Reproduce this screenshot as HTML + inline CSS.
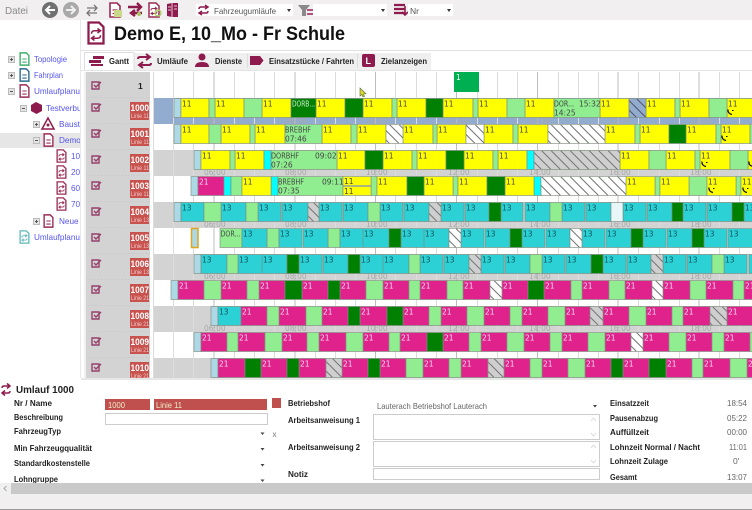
<!DOCTYPE html>
<html><head><meta charset="utf-8"><style>
html,body{margin:0;padding:0;background:#fff;width:752px;height:510px;overflow:hidden}
svg{display:block}
text{font-family:"Liberation Sans",sans-serif}
.g text{font-family:"DejaVu Sans",sans-serif;font-size:7.5px}
.y{fill:#ff0}.l{fill:#90ee90}.d{fill:#008000}.c{fill:#0ff}.t{fill:#2bd1d4}.m{fill:#e0228c}.b{fill:#add8e6}.hw{fill:url(#hw)}.hg{fill:url(#hg)}.hb{fill:url(#hb)}
.g path{stroke:#7f8c7f;stroke-width:1;stroke-opacity:.65}
.ty text{fill:#444}.tt text{fill:#0f5560}.tm text{fill:#fbdcf0}
.lb{font-weight:bold;font-size:8.5px;fill:#222}
.v{font-size:8.5px;fill:#666}
.tab{font-weight:bold;font-size:8.5px;fill:#222}
.tr{font-size:8.2px;fill:#5555ee}
.g text.tm2{font-size:7.5px;fill:#a8a8a8}
.n{font-weight:bold;font-size:9.5px;fill:#fff}
.s{font-size:6.5px;fill:#f3c9c7}
</style></head><body>
<svg xmlns="http://www.w3.org/2000/svg" width="752" height="510" viewBox="0 0 752 510">
<defs>
<pattern id="hw" patternUnits="userSpaceOnUse" width="9.5" height="19"><rect width="9.5" height="19" fill="#fff"/><path d="M-9.5 0L9.5 19M0 0L19 19" stroke="#777" stroke-width="1"/></pattern>
<pattern id="hg" patternUnits="userSpaceOnUse" width="9.5" height="19"><rect width="9.5" height="19" fill="#cfcfcf"/><path d="M-9.5 0L9.5 19M0 0L19 19" stroke="#777" stroke-width="1"/></pattern>
<pattern id="hb" patternUnits="userSpaceOnUse" width="9.5" height="19"><rect width="9.5" height="19" fill="#92acd0"/><path d="M-9.5 0L9.5 19M0 0L19 19" stroke="#556" stroke-width="1"/></pattern>
<symbol id="doc" viewBox="0 0 12 16" overflow="visible"><path d="M1 1h7l3 3v11H1z" fill="#fff" stroke="currentColor" stroke-width="1.600"/><path d="M3.500 8h5M3.500 11.500h5" stroke="currentColor" stroke-width="1.200" fill="none"/></symbol>
<symbol id="sw" viewBox="0 0 12 16" overflow="visible"><path d="M1 1h7l3 3v11H1z" fill="#fff" stroke="currentColor" stroke-width="1.500"/><path d="M3 8.500q0-2 2-2h3M7 5l2 1.500-2 1.500M9 9.500q0 2-2 2H4M5 10l-2 1.500 2 1.500" stroke="currentColor" stroke-width="1" fill="none"/></symbol>
<symbol id="ed" viewBox="0 0 11 9" overflow="visible"><path d="M1 1h7v7H1z" fill="none" stroke="#96416a" stroke-width="1.400"/><path d="M3 4l2 2 5-5" fill="none" stroke="#96416a" stroke-width="1.400"/></symbol>
<symbol id="ph" viewBox="0 0 8 8" overflow="visible"><path d="M1 1q-.5 4 4 5" fill="none" stroke="#111" stroke-width="1.300"/><path d="M5 2h1.500" stroke="#111" stroke-width="1"/></symbol>
<symbol id="ex" viewBox="0 0 7 7" overflow="visible"><rect x=".5" y=".5" width="6" height="6" fill="#e4e4e4" stroke="#bbb"/><path d="M2 3.500h3" stroke="#555"/></symbol>
<symbol id="ep" viewBox="0 0 7 7" overflow="visible"><rect x=".5" y=".5" width="6" height="6" fill="#e4e4e4" stroke="#bbb"/><path d="M2 3.500h3M3.500 2v3" stroke="#555"/></symbol>
</defs>

<!-- top toolbar -->
<rect x="0" y="0" width="752" height="20" fill="#f1efef"/>
<text x="5" y="14" font-size="10.500" fill="#8a8a8a" textLength="23" lengthAdjust="spacingAndGlyphs">Datei</text>
<circle cx="50" cy="10" r="8" fill="#707070"/><path d="M55 10h-9M50 6l-4 4 4 4" stroke="#fff" stroke-width="2" fill="none"/>
<circle cx="71" cy="10" r="8" fill="#a9a9a9"/><path d="M66 10h9M71 6l4 4-4 4" stroke="#eee" stroke-width="2" fill="none"/>
<path d="M87 8h10M94 5l3 3-3 3M97 13H87M90 10l-3 3 3 3" stroke="#777" stroke-width="1.300" fill="none"/>
<use href="#doc" x="109" y="2" width="12" height="16" color="#9a2b57"/><rect x="114" y="10" width="8" height="7" fill="#c9d88a"/>
<path d="M128 7h12M137 3l4 4-4 4" stroke="#8e1b4d" stroke-width="2.400" fill="none"/><path d="M142 13h-10M135 10l-4 3 4 3" stroke="#8e1b4d" stroke-width="2.400" fill="none"/><circle cx="139" cy="14" r="2" fill="#a8c860"/>
<use href="#sw" x="148" y="2" width="12" height="16" color="#9a2b57"/><circle cx="158" cy="13" r="3" fill="none" stroke="#a8d060" stroke-width="1.300"/>
<path d="M167 4l5-1h6v14h-6l-5-1z" fill="#8e1b4d"/><path d="M172 3v14M174 6h3M174 9h3M168 7h3M168 10h3" stroke="#e8c8d4" stroke-width="1"/>
<rect x="196" y="4" width="97" height="12" fill="#fff"/>
<path d="M199 9q0-2 2-2h6M205 5l3 2-3 2M208 11q0 2-2 2h-6M202 11l-3 2 3 2" stroke="#8e1b4d" stroke-width="1.500" fill="none"/>
<text x="214" y="14" font-size="8.500" fill="#555" textLength="62" lengthAdjust="spacingAndGlyphs">Fahrzeugumläufe</text>
<path d="M287 9h4l-2 3z" fill="#333"/>
<path d="M298 5h12l-4 5v6h-4v-6z" fill="#8a8a8a"/><path d="M307 10h6M307 14h6" stroke="#a01f55" stroke-width="1.500"/>
<rect x="313" y="4" width="74" height="12" fill="#fff"/>
<path d="M381 9h4l-2 3z" fill="#333"/>
<path d="M394 5h11M394 9h11M394 13h11" stroke="#8e1b4d" stroke-width="2.200"/><path d="M405 6v9M402 12l3 3 3-3" stroke="#8e1b4d" stroke-width="1.600" fill="none"/>
<rect x="408" y="4" width="45" height="12" fill="#fff"/>
<text x="410" y="14" font-size="8.500" fill="#555">Nr</text>
<path d="M447 9h4l-2 3z" fill="#333"/>

<!-- tree -->
<use href="#ep" x="8" y="56" width="7" height="7"/>
<use href="#doc" x="19" y="52" width="11" height="14" color="#3fae6a"/>
<text class="tr" x="34" y="62" textLength="33" lengthAdjust="spacingAndGlyphs">Topologie</text>
<use href="#ep" x="8" y="72" width="7" height="7"/>
<use href="#doc" x="19" y="68" width="11" height="14" color="#2a6a8e"/>
<text class="tr" x="34" y="78" textLength="29" lengthAdjust="spacingAndGlyphs">Fahrplan</text>
<use href="#ex" x="8" y="88" width="7" height="7"/>
<use href="#doc" x="19" y="84" width="11" height="14" color="#9a2b57"/>
<text class="tr" x="34" y="94">Umlaufplanung</text>
<use href="#ex" x="20" y="105" width="7" height="7"/>
<path d="M36 102l6 3v6l-5.500 3-5.500-3v-6z" fill="#8e1b4d"/>
<text class="tr" x="46" y="111">Testverbund</text>
<use href="#ep" x="33" y="121" width="7" height="7"/>
<path d="M48 118l6 11H42z" fill="#fff" stroke="#8e1b4d" stroke-width="1.500"/><circle cx="48" cy="125" r="1.500" fill="#8e1b4d"/>
<text class="tr" x="59" y="127">Baustelle</text>
<rect x="0" y="133" width="80" height="15" fill="#e6e6e6"/>
<use href="#ex" x="33" y="137" width="7" height="7"/>
<use href="#doc" x="43" y="133" width="11" height="14" color="#9a2b57"/>
<text class="tr" x="59" y="143">Demo E</text>
<use href="#sw" x="56" y="149" width="11" height="14" color="#9a2b57"/><text class="tr" x="71" y="159">10_Mo</text>
<use href="#sw" x="56" y="165" width="11" height="14" color="#9a2b57"/><text class="tr" x="71" y="175">20_Sa</text>
<use href="#sw" x="56" y="181" width="11" height="14" color="#9a2b57"/><text class="tr" x="71" y="191">60_So</text>
<use href="#sw" x="56" y="197" width="11" height="14" color="#9a2b57"/><text class="tr" x="71" y="207">70_Fe</text>
<use href="#ep" x="33" y="218" width="7" height="7"/>
<use href="#doc" x="43" y="214" width="11" height="14" color="#9a2b57"/>
<text class="tr" x="59" y="224">Neue</text>
<use href="#sw" x="19" y="230" width="11" height="14" color="#5fb8b8"/>
<text class="tr" x="34" y="240">Umlaufplanung</text>

<!-- main -->
<rect x="80" y="20" width="672" height="360" fill="#fff"/>
<rect x="80" y="20" width="1" height="360" fill="#e8e8e8"/>
<rect x="84" y="72" width="2" height="306" fill="#f0f0f0"/>
<use href="#sw" x="87" y="21" width="18" height="24" color="#8e1b4d"/>
<text x="114" y="40" font-size="19.500" font-weight="bold" fill="#111" textLength="231" lengthAdjust="spacingAndGlyphs">Demo E, 10_Mo - Fr Schule</text>
<rect x="81" y="50" width="671" height="1" fill="#e2e2e2"/>
<rect x="134" y="53" width="297" height="17" fill="#efefef"/>
<path d="M84.500 70V52.500h49.500V70" fill="#fff" stroke="#ddd"/>
<path d="M89 60h12v3H89zM93 56h11v3H93zM91 64h12v2H91z" fill="#8e1b4d"/>
<text class="tab" x="109" y="64" textLength="20" lengthAdjust="spacingAndGlyphs">Gantt</text>
<path d="M138 59q0-2 2-2h9M146 54l4 3-4 3M151 63q0 2-2 2h-9M143 62l-4 3 4 3" stroke="#8e1b4d" stroke-width="2" fill="none"/>
<text class="tab" x="157" y="64" textLength="31" lengthAdjust="spacingAndGlyphs">Umläufe</text>
<circle cx="202" cy="57" r="3.500" fill="#8e1b4d"/><path d="M195 67q0-5 7-5t7 5z" fill="#8e1b4d"/>
<text class="tab" x="215" y="64" textLength="27" lengthAdjust="spacingAndGlyphs">Dienste</text>
<rect x="247" y="54" width="1" height="14" fill="#ddd"/>
<path d="M250 56h10l3.500 4.500L260 65h-10z" fill="#8e1b4d"/>
<text class="tab" x="269" y="64" textLength="85" lengthAdjust="spacingAndGlyphs">Einsatzstücke / Fahrten</text>
<rect x="357" y="54" width="1" height="14" fill="#ddd"/>
<rect x="362" y="54" width="13" height="13" rx="2" fill="#8e1b4d"/><text x="365.500" y="64" font-size="9" font-weight="bold" fill="#fff">L</text>
<text class="tab" x="381" y="64" textLength="46" lengthAdjust="spacingAndGlyphs">Zielanzeigen</text>
<rect x="81" y="70" width="671" height="1" fill="#e4e4e4"/>

<!-- left column -->
<rect x="86" y="72" width="64" height="306" fill="#d3d3d3"/>
<path d="M86 97.500h64M86 123.500h64M86 149.500h64M86 175.500h64M86 201.500h64M86 227.500h64M86 253.500h64M86 279.500h64M86 305.500h64M86 331.500h64M86 357.500h64" stroke="#c6c6c6" stroke-dasharray="1 2"/>
<text x="138" y="89" font-size="8.500" font-weight="bold" fill="#222">1</text>
<use href="#ed" x="91" y="81" width="11" height="9"/>
<use href="#ed" x="91" y="103" width="11" height="9"/>
<use href="#ed" x="91" y="129" width="11" height="9"/>
<use href="#ed" x="91" y="155" width="11" height="9"/>
<use href="#ed" x="91" y="181" width="11" height="9"/>
<use href="#ed" x="91" y="207" width="11" height="9"/>
<use href="#ed" x="91" y="233" width="11" height="9"/>
<use href="#ed" x="91" y="259" width="11" height="9"/>
<use href="#ed" x="91" y="285" width="11" height="9"/>
<use href="#ed" x="91" y="311" width="11" height="9"/>
<use href="#ed" x="91" y="337" width="11" height="9"/>
<use href="#ed" x="91" y="363" width="11" height="9"/>
<g fill="#c8524e">
<rect x="130" y="102" width="19" height="18"/><rect x="130" y="128" width="19" height="18"/><rect x="130" y="154" width="19" height="18"/><rect x="130" y="180" width="19" height="18"/><rect x="130" y="206" width="19" height="18"/><rect x="130" y="232" width="19" height="18"/><rect x="130" y="258" width="19" height="18"/><rect x="130" y="284" width="19" height="18"/><rect x="130" y="310" width="19" height="18"/><rect x="130" y="336" width="19" height="18"/><rect x="130" y="362" width="19" height="16"/>
</g>
<text class="n" x="130.500" y="111" textLength="18.500" lengthAdjust="spacingAndGlyphs">1000</text><text class="s" x="131" y="118" textLength="18" lengthAdjust="spacingAndGlyphs">Linie 11</text>
<text class="n" x="130.500" y="137" textLength="18.500" lengthAdjust="spacingAndGlyphs">1001</text><text class="s" x="131" y="144" textLength="18" lengthAdjust="spacingAndGlyphs">Linie 11</text>
<text class="n" x="130.500" y="163" textLength="18.500" lengthAdjust="spacingAndGlyphs">1002</text><text class="s" x="131" y="170" textLength="18" lengthAdjust="spacingAndGlyphs">Linie 11</text>
<text class="n" x="130.500" y="189" textLength="18.500" lengthAdjust="spacingAndGlyphs">1003</text><text class="s" x="131" y="196" textLength="18" lengthAdjust="spacingAndGlyphs">Linie 11</text>
<text class="n" x="130.500" y="215" textLength="18.500" lengthAdjust="spacingAndGlyphs">1004</text><text class="s" x="131" y="222" textLength="18" lengthAdjust="spacingAndGlyphs">Linie 13</text>
<text class="n" x="130.500" y="241" textLength="18.500" lengthAdjust="spacingAndGlyphs">1005</text><text class="s" x="131" y="248" textLength="18" lengthAdjust="spacingAndGlyphs">Linie 13</text>
<text class="n" x="130.500" y="267" textLength="18.500" lengthAdjust="spacingAndGlyphs">1006</text><text class="s" x="131" y="274" textLength="18" lengthAdjust="spacingAndGlyphs">Linie 13</text>
<text class="n" x="130.500" y="293" textLength="18.500" lengthAdjust="spacingAndGlyphs">1007</text><text class="s" x="131" y="300" textLength="18" lengthAdjust="spacingAndGlyphs">Linie 21</text>
<text class="n" x="130.500" y="319" textLength="18.500" lengthAdjust="spacingAndGlyphs">1008</text><text class="s" x="131" y="326" textLength="18" lengthAdjust="spacingAndGlyphs">Linie 21</text>
<text class="n" x="130.500" y="345" textLength="18.500" lengthAdjust="spacingAndGlyphs">1009</text><text class="s" x="131" y="352" textLength="18" lengthAdjust="spacingAndGlyphs">Linie 21</text>
<text class="n" x="130.500" y="371" textLength="18.500" lengthAdjust="spacingAndGlyphs">1010</text><text class="s" x="131" y="378" textLength="18" lengthAdjust="spacingAndGlyphs">Linie 21</text>

<!-- row bands -->
<rect x="153" y="98" width="599" height="26" fill="#92acd0"/>
<rect x="153" y="150" width="599" height="26" fill="#d3d3d3"/>
<rect x="153" y="202" width="599" height="26" fill="#d3d3d3"/>
<rect x="153" y="254" width="599" height="26" fill="#d3d3d3"/>
<rect x="153" y="306" width="599" height="26" fill="#d3d3d3"/>
<rect x="153" y="358" width="599" height="20" fill="#d3d3d3"/>

<!-- grid lines -->
<path d="M153.500 72V378M173.500 72V378M193.500 72V378M234.500 72V378M254.500 72V378M274.500 72V378M315.500 72V378M335.500 72V378M355.500 72V378M395.500 72V378M416.500 72V378M436.500 72V378M477.500 72V378M497.500 72V378M517.500 72V378M558.500 72V378M578.500 72V378M598.500 72V378M638.500 72V378M659.500 72V378M679.500 72V378M719.500 72V378M739.500 72V378" stroke="#dcdcdc" stroke-width="1"/>
<path d="M214 72V378M295 72V378M375.500 72V378M456.500 72V378M537.500 72V378M618 72V378M699 72V378" stroke="#bdbdbd" stroke-width="1"/>

<!-- header block -->
<rect x="454" y="72" width="25" height="20" fill="#00b050"/>
<text x="456" y="80" font-size="7.500" fill="#fff" style="font-family:'DejaVu Sans',sans-serif">1</text>

<!-- time labels -->
<g class="g">
<text class="tm2" x="204" y="123">06:00</text><text class="tm2" x="285" y="123">08:00</text><text class="tm2" x="366" y="123">10:00</text><text class="tm2" x="448" y="123">12:00</text><text class="tm2" x="529" y="123">14:00</text><text class="tm2" x="609" y="123">16:00</text><text class="tm2" x="690" y="123">18:00</text>
<text class="tm2" x="204" y="175">06:00</text><text class="tm2" x="285" y="175">08:00</text><text class="tm2" x="366" y="175">10:00</text><text class="tm2" x="448" y="175">12:00</text><text class="tm2" x="529" y="175">14:00</text><text class="tm2" x="609" y="175">16:00</text><text class="tm2" x="690" y="175">18:00</text>
<text class="tm2" x="204" y="227">06:00</text><text class="tm2" x="285" y="227">08:00</text><text class="tm2" x="366" y="227">10:00</text><text class="tm2" x="448" y="227">12:00</text><text class="tm2" x="529" y="227">14:00</text><text class="tm2" x="609" y="227">16:00</text><text class="tm2" x="690" y="227">18:00</text>
<text class="tm2" x="204" y="279">06:00</text><text class="tm2" x="285" y="279">08:00</text><text class="tm2" x="366" y="279">10:00</text><text class="tm2" x="448" y="279">12:00</text><text class="tm2" x="529" y="279">14:00</text><text class="tm2" x="609" y="279">16:00</text><text class="tm2" x="690" y="279">18:00</text>
<text class="tm2" x="204" y="331">06:00</text><text class="tm2" x="285" y="331">08:00</text><text class="tm2" x="366" y="331">10:00</text><text class="tm2" x="448" y="331">12:00</text><text class="tm2" x="529" y="331">14:00</text><text class="tm2" x="609" y="331">16:00</text><text class="tm2" x="690" y="331">18:00</text>
</g>

<!-- 1000 -->
<g class="g ty" transform="translate(0 98.500)">
<path class="b" d="M174 0h7v19h-7z"/>
<path class="y" d="M181 0h28v19h-28zM215 0h29v19h-29zM262 0h29v19h-29zM316 0h29v19h-29zM363 0h29v19h-29zM397 0h29v19h-29zM443 0h30v19h-30zM478 0h29v19h-29zM525 0h29v19h-29zM600 0h29v19h-29zM646 0h29v19h-29zM680 0h29v19h-29zM727 0h29v19h-29z"/>
<path class="l" d="M209 0h6v19h-6zM244 0h18v19h-18zM392 0h5v19h-5zM473 0h5v19h-5zM507 0h18v19h-18zM554 0h46v19h-46zM675 0h5v19h-5zM709 0h18v19h-18z"/>
<path class="d" d="M291 0h25v19h-25zM345 0h18v19h-18zM426 0h17v19h-17z"/>
<path class="hb" d="M629 0h17v19h-17z"/>
<text x="182" y="8">11</text><text x="216" y="8">11</text><text x="263" y="8">11</text><text x="317" y="8">11</text><text x="364" y="8">11</text><text x="398" y="8">11</text><text x="444" y="8">11</text><text x="479" y="8">11</text><text x="526" y="8">11</text><text x="601" y="8">11</text><text x="647" y="8">11</text><text x="681" y="8">11</text><text x="728" y="8">11</text>
<text x="292" y="8" style="fill:#cfeccf" textLength="23" lengthAdjust="spacingAndGlyphs">DORB...</text>
<text x="554" y="8" textLength="20" lengthAdjust="spacingAndGlyphs">DOR...</text><text x="579" y="8">15:32</text><text x="554" y="17">14:25</text>
<use href="#ph" x="727" y="10" width="8" height="8"/>
</g>
<!-- 1001 -->
<g class="g ty" transform="translate(0 124.500)">
<path class="b" d="M174 0h7v19h-7z"/>
<path class="y" d="M181 0h28v19h-28zM221 0h29v19h-29zM255 0h30v19h-30zM322 0h29v19h-29zM357 0h29v19h-29zM403 0h30v19h-30zM437 0h29v19h-29zM484 0h29v19h-29zM518 0h30v19h-30zM605 0h30v19h-30zM640 0h29v19h-29zM686 0h30v19h-30zM721 0h29v19h-29z"/>
<path class="l" d="M209 0h12v19h-12zM250 0h5v19h-5zM285 0h37v19h-37zM351 0h6v19h-6zM433 0h4v19h-4zM513 0h5v19h-5zM635 0h5v19h-5zM716 0h5v19h-5zM750 0h3v19h-3z"/>
<path class="d" d="M669 0h17v19h-17z"/>
<path class="hw" d="M386 0h17v19h-17zM466 0h18v19h-18zM548 0h57v19h-57z"/>
<text x="182" y="8">11</text><text x="222" y="8">11</text><text x="256" y="8">11</text><text x="323" y="8">11</text><text x="358" y="8">11</text><text x="404" y="8">11</text><text x="438" y="8">11</text><text x="485" y="8">11</text><text x="519" y="8">11</text><text x="606" y="8">11</text><text x="641" y="8">11</text><text x="687" y="8">11</text><text x="722" y="8">11</text>
<text x="285" y="8" textLength="26" lengthAdjust="spacingAndGlyphs">BREBHF</text><text x="285" y="17">07:46</text>
<use href="#ph" x="721" y="10" width="8" height="8"/>
</g>
<!-- 1002 -->
<g class="g ty" transform="translate(0 150.500)">
<path class="b" d="M194 0h7v19h-7z"/>
<path class="y" d="M201 0h29v19h-29zM235 0h29v19h-29zM337 0h28v19h-28zM383 0h29v19h-29zM417 0h29v19h-29zM464 0h29v19h-29zM498 0h29v19h-29zM620 0h29v19h-29zM666 0h29v19h-29zM700 0h30v19h-30zM748 0h6v19h-6z"/>
<path class="l" d="M230 0h5v19h-5zM271 0h66v19h-66zM412 0h5v19h-5zM493 0h5v19h-5zM649 0h17v19h-17zM695 0h5v19h-5zM730 0h18v19h-18z"/>
<path class="c" d="M264 0h7v19h-7zM527 0h7v19h-7z"/>
<path class="d" d="M365 0h18v19h-18zM446 0h18v19h-18z"/>
<path class="hg" d="M534 0h86v19h-86z"/>
<text x="202" y="8">11</text><text x="236" y="8">11</text><text x="338" y="8">11</text><text x="384" y="8">11</text><text x="418" y="8">11</text><text x="465" y="8">11</text><text x="499" y="8">11</text><text x="621" y="8">11</text><text x="667" y="8">11</text><text x="701" y="8">11</text>
<text x="271" y="8" textLength="28" lengthAdjust="spacingAndGlyphs">DORBHF</text><text x="315" y="8">09:02</text><text x="271" y="17">07:26</text>
<use href="#ph" x="701" y="10" width="8" height="8"/><use href="#ph" x="748" y="10" width="8" height="8"/>
</g>
<!-- 1003 -->
<g class="g ty" transform="translate(0 176.500)">
<path class="b" d="M191 0h7v19h-7z"/>
<path class="m" d="M198 0h26v19h-26z"/>
<path class="c" d="M224 0h7v19h-7zM271 0h7v19h-7zM534 0h7v19h-7z"/>
<path class="l" d="M231 0h11v19h-11zM278 0h65v19h-65zM371 0h6v19h-6zM453 0h5v19h-5zM655 0h5v19h-5zM689 0h18v19h-18zM736 0h5v19h-5z"/>
<path class="y" d="M242 0h29v19h-29zM343 0h28v9h-28zM343 10h28v9h-28zM377 0h30v19h-30zM424 0h29v19h-29zM458 0h29v19h-29zM505 0h29v19h-29zM626 0h29v19h-29zM660 0h29v19h-29zM707 0h29v19h-29zM741 0h13v19h-13z"/>
<path class="d" d="M407 0h17v19h-17zM487 0h18v19h-18z"/>
<path class="hw" d="M541 0h85v19h-85z"/>
<text x="199" y="8" style="fill:#fbdcf0">21</text>
<text x="243" y="8">11</text><text x="344" y="7.500">11</text><text x="344" y="17.500">11</text><text x="378" y="8">11</text><text x="425" y="8">11</text><text x="459" y="8">11</text><text x="506" y="8">11</text><text x="627" y="8">11</text><text x="661" y="8">11</text><text x="708" y="8">11</text><text x="742" y="8">11</text>
<text x="278" y="8" textLength="26" lengthAdjust="spacingAndGlyphs">BREBHF</text><text x="322" y="8">09:11</text><text x="278" y="17">07:35</text>
<use href="#ph" x="708" y="10" width="8" height="8"/><use href="#ph" x="742" y="10" width="8" height="8"/>
</g>
<!-- 1004 -->
<g class="g tt" transform="translate(0 202.500)">
<path class="b" d="M174 0h7v19h-7z"/>
<path class="t" d="M181 0h23v19h-23zM221 0h25v19h-25zM258 0h23v19h-23zM282 0h26v19h-26zM319 0h23v19h-23zM343 0h25v19h-25zM380 0h23v19h-23zM404 0h25v19h-25zM441 0h23v19h-23zM465 0h24v19h-24zM501 0h22v19h-22zM525 0h25v19h-25zM562 0h23v19h-23zM586 0h25v19h-25zM623 0h23v19h-23zM647 0h25v19h-25zM683 0h23v19h-23zM707 0h25v19h-25zM744 0h10v19h-10z"/>
<path class="l" d="M204 0h17v19h-17zM246 0h12v19h-12zM368 0h12v19h-12zM550 0h12v19h-12z"/>
<path class="d" d="M489 0h12v19h-12zM672 0h11v19h-11zM732 0h12v19h-12z"/>
<path class="hg" d="M308 0h11v19h-11zM429 0h12v19h-12z"/>
<path d="M611 0h12v19h-12z" fill="#e8f6f8"/>
<text x="182" y="8">13</text><text x="222" y="8">13</text><text x="259" y="8">13</text><text x="283" y="8">13</text><text x="320" y="8">13</text><text x="344" y="8">13</text><text x="381" y="8">13</text><text x="405" y="8">13</text><text x="442" y="8">13</text><text x="466" y="8">13</text><text x="502" y="8">13</text><text x="526" y="8">13</text><text x="563" y="8">13</text><text x="587" y="8">13</text><text x="624" y="8">13</text><text x="648" y="8">13</text><text x="684" y="8">13</text><text x="708" y="8">13</text><text x="745" y="8">13</text>
</g>
<!-- 1005 -->
<g class="g tt" transform="translate(0 228.500)">
<path d="M191.500 0h6.500v19h-6.500z" fill="#add8e6" style="stroke:#dda520;stroke-width:1.500;stroke-opacity:1"/>
<path class="l" d="M220 0h22v19h-22zM267 0h12v19h-12zM328 0h12v19h-12z"/>
<path class="t" d="M242 0h25v19h-25zM279 0h23v19h-23zM303 0h25v19h-25zM340 0h23v19h-23zM363 0h26v19h-26zM401 0h23v19h-23zM424 0h25v19h-25zM461 0h23v19h-23zM485 0h25v19h-25zM522 0h23v19h-23zM546 0h24v19h-24zM582 0h23v19h-23zM606 0h25v19h-25zM643 0h23v19h-23zM667 0h25v19h-25zM704 0h23v19h-23zM728 0h26v19h-26z"/>
<path class="d" d="M389 0h12v19h-12zM510 0h12v19h-12zM631 0h12v19h-12zM692 0h12v19h-12z"/>
<path class="hw" d="M449 0h12v19h-12zM570 0h12v19h-12z"/>
<text x="220.500" y="8" style="fill:#444" textLength="20" lengthAdjust="spacingAndGlyphs">DOR...</text>
<text x="243" y="8">13</text><text x="280" y="8">13</text><text x="304" y="8">13</text><text x="341" y="8">13</text><text x="364" y="8">13</text><text x="402" y="8">13</text><text x="425" y="8">13</text><text x="462" y="8">13</text><text x="486" y="8">13</text><text x="523" y="8">13</text><text x="547" y="8">13</text><text x="583" y="8">13</text><text x="607" y="8">13</text><text x="644" y="8">13</text><text x="668" y="8">13</text><text x="705" y="8">13</text><text x="729" y="8">13</text>
</g>
<!-- 1006 -->
<g class="g tt" transform="translate(0 254.500)">
<path class="b" d="M194 0h7v19h-7z"/>
<path class="t" d="M201 0h26v19h-26zM238 0h24v19h-24zM262 0h25v19h-25zM299 0h23v19h-23zM323 0h25v19h-25zM360 0h23v19h-23zM383 0h26v19h-26zM420 0h23v19h-23zM444 0h25v19h-25zM481 0h23v19h-23zM505 0h25v19h-25zM542 0h23v19h-23zM566 0h25v19h-25zM603 0h23v19h-23zM627 0h24v19h-24zM663 0h23v19h-23zM687 0h25v19h-25zM724 0h23v19h-23zM749 0h5v19h-5z"/>
<path class="l" d="M227 0h11v19h-11zM409 0h11v19h-11zM530 0h12v19h-12zM712 0h12v19h-12z"/>
<path class="d" d="M287 0h12v19h-12zM348 0h12v19h-12zM591 0h12v19h-12z"/>
<path class="hg" d="M469 0h12v19h-12zM651 0h12v19h-12z"/>
<text x="202" y="8">13</text><text x="239" y="8">13</text><text x="263" y="8">13</text><text x="300" y="8">13</text><text x="324" y="8">13</text><text x="361" y="8">13</text><text x="384" y="8">13</text><text x="421" y="8">13</text><text x="445" y="8">13</text><text x="482" y="8">13</text><text x="506" y="8">13</text><text x="543" y="8">13</text><text x="567" y="8">13</text><text x="604" y="8">13</text><text x="628" y="8">13</text><text x="664" y="8">13</text><text x="688" y="8">13</text><text x="725" y="8">13</text>
</g>
<!-- 1007 -->
<g class="g tm" transform="translate(0 280.500)">
<path class="b" d="M171 0h7v19h-7z"/>
<path class="m" d="M178 0h26v19h-26zM221 0h26v19h-26zM259 0h26v19h-26zM302 0h26v19h-26zM340 0h26v19h-26zM383 0h26v19h-26zM420 0h27v19h-27zM463 0h27v19h-27zM502 0h26v19h-26zM544 0h27v19h-27zM582 0h27v19h-27zM625 0h27v19h-27zM663 0h27v19h-27zM706 0h27v19h-27zM744 0h10v19h-10z"/>
<path class="l" d="M204 0h17v19h-17zM247 0h12v19h-12zM366 0h17v19h-17zM409 0h11v19h-11zM447 0h16v19h-16zM571 0h11v19h-11zM609 0h16v19h-16zM690 0h16v19h-16zM733 0h11v19h-11z"/>
<path class="d" d="M285 0h17v19h-17zM328 0h12v19h-12zM528 0h16v19h-16z"/>
<path class="hw" d="M490 0h12v19h-12zM652 0h11v19h-11z"/>
<text x="179" y="8">21</text><text x="222" y="8">21</text><text x="260" y="8">21</text><text x="303" y="8">21</text><text x="341" y="8">21</text><text x="384" y="8">21</text><text x="421" y="8">21</text><text x="464" y="8">21</text><text x="503" y="8">21</text><text x="545" y="8">21</text><text x="583" y="8">21</text><text x="626" y="8">21</text><text x="664" y="8">21</text><text x="707" y="8">21</text><text x="745" y="8">21</text>
</g>
<!-- 1008 -->
<g class="g tm" transform="translate(0 306.500)">
<path class="b" d="M211 0h7v19h-7z"/>
<path class="t" d="M218 0h23v19h-23z"/>
<path class="m" d="M241 0h26v19h-26zM279 0h27v19h-27zM322 0h26v19h-26zM360 0h27v19h-27zM403 0h26v19h-26zM441 0h26v19h-26zM484 0h26v19h-26zM522 0h26v19h-26zM565 0h25v19h-25zM603 0h26v19h-26zM646 0h26v19h-26zM683 0h27v19h-27zM727 0h27v19h-27z"/>
<path class="l" d="M267 0h12v19h-12zM306 0h16v19h-16zM429 0h12v19h-12zM467 0h17v19h-17zM510 0h12v19h-12zM548 0h17v19h-17zM629 0h17v19h-17zM672 0h11v19h-11z"/>
<path class="d" d="M348 0h12v19h-12zM387 0h16v19h-16z"/>
<path class="hg" d="M590 0h13v19h-13zM710 0h17v19h-17z"/>
<text x="219" y="8" style="fill:#0f5560">13</text>
<text x="242" y="8">21</text><text x="280" y="8">21</text><text x="323" y="8">21</text><text x="361" y="8">21</text><text x="404" y="8">21</text><text x="442" y="8">21</text><text x="485" y="8">21</text><text x="523" y="8">21</text><text x="566" y="8">21</text><text x="604" y="8">21</text><text x="647" y="8">21</text><text x="684" y="8">21</text><text x="728" y="8">21</text>
</g>
<!-- 1009 -->
<g class="g tm" transform="translate(0 332.500)">
<path class="b" d="M194 0h7v19h-7z"/>
<path class="m" d="M201 0h26v19h-26zM238 0h27v19h-27zM282 0h25v19h-25zM319 0h27v19h-27zM363 0h26v19h-26zM400 0h27v19h-27zM443 0h26v19h-26zM481 0h26v19h-26zM524 0h26v19h-26zM562 0h26v19h-26zM605 0h26v19h-26zM643 0h26v19h-26zM686 0h26v19h-26zM724 0h26v19h-26z"/>
<path class="l" d="M227 0h11v19h-11zM265 0h17v19h-17zM307 0h12v19h-12zM346 0h17v19h-17zM389 0h11v19h-11zM469 0h12v19h-12zM507 0h17v19h-17zM550 0h12v19h-12zM588 0h17v19h-17zM669 0h17v19h-17zM712 0h12v19h-12zM750 0h4v19h-4z"/>
<path class="d" d="M427 0h16v19h-16z"/>
<path class="hw" d="M631 0h12v19h-12z"/>
<text x="202" y="8">21</text><text x="239" y="8">21</text><text x="283" y="8">21</text><text x="320" y="8">21</text><text x="364" y="8">21</text><text x="401" y="8">21</text><text x="444" y="8">21</text><text x="482" y="8">21</text><text x="525" y="8">21</text><text x="563" y="8">21</text><text x="606" y="8">21</text><text x="644" y="8">21</text><text x="687" y="8">21</text><text x="725" y="8">21</text>
</g>
<!-- 1010 -->
<g class="g tm" transform="translate(0 358.500)">
<path class="b" d="M211 0h7v19h-7z"/>
<path class="m" d="M218 0h27v19h-27zM261 0h26v19h-26zM299 0h27v19h-27zM342 0h26v19h-26zM380 0h26v19h-26zM423 0h26v19h-26zM461 0h27v19h-27zM504 0h26v19h-26zM542 0h26v19h-26zM585 0h26v19h-26zM623 0h26v19h-26zM666 0h26v19h-26zM703 0h27v19h-27zM747 0h7v19h-7z"/>
<path class="l" d="M406 0h17v19h-17zM449 0h12v19h-12zM530 0h12v19h-12zM568 0h17v19h-17zM692 0h11v19h-11zM730 0h17v19h-17z"/>
<path class="d" d="M245 0h16v19h-16zM287 0h12v19h-12zM368 0h12v19h-12zM611 0h12v19h-12zM649 0h17v19h-17z"/>
<path class="hg" d="M326 0h16v19h-16zM488 0h16v19h-16z"/>
<text x="219" y="8">21</text><text x="262" y="8">21</text><text x="300" y="8">21</text><text x="343" y="8">21</text><text x="381" y="8">21</text><text x="424" y="8">21</text><text x="462" y="8">21</text><text x="505" y="8">21</text><text x="543" y="8">21</text><text x="586" y="8">21</text><text x="624" y="8">21</text><text x="667" y="8">21</text><text x="704" y="8">21</text><text x="748" y="8">21</text>
</g>

<!-- cursor -->
<path d="M360 88l0 8 2-1.500 1 2.500 1.500-.5-1-2.500 2.500-.2z" fill="#d8d830" stroke="#556b2f" stroke-width=".6"/>

<!-- bottom panel -->
<rect x="0" y="378" width="752" height="132" fill="#fff"/>
<rect x="81" y="378" width="671" height="2" fill="#e6e6e6"/>
<path d="M2 388q0-2 2-2h5M7 383.500l3 2.500-3 2.500M10 391q0 2-2 2H3M5 390.500l-3 2.500 3 2.500" stroke="#8e1b4d" stroke-width="1.500" fill="none"/>
<text x="16" y="393" font-size="10.500" font-weight="bold" fill="#222" textLength="58" lengthAdjust="spacingAndGlyphs">Umlauf 1000</text>
<text class="lb" x="14" y="406" textLength="38" lengthAdjust="spacingAndGlyphs">Nr / Name</text>
<rect x="105" y="399" width="45" height="11" fill="#c0504d"/><text x="108" y="408" font-size="8.500" fill="#eec" textLength="17" lengthAdjust="spacingAndGlyphs">1000</text>
<rect x="154" y="399" width="113" height="11" fill="#c0504d"/><text x="156" y="408" font-size="8.500" fill="#eec" textLength="26" lengthAdjust="spacingAndGlyphs">Linie 11</text>
<rect x="272" y="398" width="9" height="10" fill="#c0504d"/>
<text class="lb" x="14" y="420" textLength="49" lengthAdjust="spacingAndGlyphs">Beschreibung</text>
<rect x="105.500" y="413.500" width="162" height="11" fill="#fff" stroke="#ccc"/>
<text class="lb" x="14" y="434" textLength="47" lengthAdjust="spacingAndGlyphs">FahrzeugTyp</text>
<path d="M260.500 432.500h4l-2 2.500z" fill="#444"/>
<text x="272.500" y="437" font-size="8" fill="#777">x</text>
<text class="lb" x="14" y="451" textLength="78" lengthAdjust="spacingAndGlyphs">Min Fahrzeugqualität</text>
<path d="M260.500 448h4l-2 2.500z" fill="#444"/>
<text class="lb" x="14" y="466" textLength="76" lengthAdjust="spacingAndGlyphs">Standardkostenstelle</text>
<path d="M260.500 464h4l-2 2.500z" fill="#444"/>
<text class="lb" x="14" y="482" textLength="44" lengthAdjust="spacingAndGlyphs">Lohngruppe</text>
<path d="M260.500 479.500h4l-2 2.500z" fill="#444"/>

<text class="lb" x="288" y="406" textLength="42" lengthAdjust="spacingAndGlyphs">Betriebshof</text>
<text x="377" y="409" font-size="8.500" fill="#666" textLength="110" lengthAdjust="spacingAndGlyphs">Lauterach Betriebshof Lauterach</text>
<path d="M593 405h4l-2 2.500z" fill="#444"/>
<text class="lb" x="288" y="423" textLength="72" lengthAdjust="spacingAndGlyphs">Arbeitsanweisung 1</text>
<rect x="373.500" y="414.500" width="226" height="25" fill="#fff" stroke="#ccc"/>
<path d="M591 421l2.500-3 2.500 3M591 433l2.500 3 2.500-3" stroke="#ddd" fill="none"/>
<text class="lb" x="288" y="450" textLength="72" lengthAdjust="spacingAndGlyphs">Arbeitsanweisung 2</text>
<rect x="373.500" y="441.500" width="226" height="25" fill="#fff" stroke="#ccc"/>
<path d="M591 448l2.500-3 2.500 3M591 460l2.500 3 2.500-3" stroke="#ddd" fill="none"/>
<text class="lb" x="288" y="477" textLength="20" lengthAdjust="spacingAndGlyphs">Notiz</text>
<rect x="373.500" y="468.500" width="226" height="11" fill="#fff" stroke="#ccc"/>

<text class="lb" x="610" y="406" textLength="39" lengthAdjust="spacingAndGlyphs">Einsatzzeit</text><text class="v" x="727" y="406" textLength="20" lengthAdjust="spacingAndGlyphs">18:54</text>
<text class="lb" x="610" y="421" textLength="48" lengthAdjust="spacingAndGlyphs">Pausenabzug</text><text class="v" x="727" y="421" textLength="20" lengthAdjust="spacingAndGlyphs">05:22</text>
<text class="lb" x="610" y="435" textLength="39" lengthAdjust="spacingAndGlyphs">Auffüllzeit</text><text class="v" x="727" y="435" textLength="20" lengthAdjust="spacingAndGlyphs">00:00</text>
<text class="lb" x="610" y="450" textLength="90" lengthAdjust="spacingAndGlyphs">Lohnzeit Normal / Nacht</text><text class="v" x="729" y="450" textLength="18" lengthAdjust="spacingAndGlyphs">11:01</text>
<text class="lb" x="610" y="464" textLength="58" lengthAdjust="spacingAndGlyphs">Lohnzeit Zulage</text><text class="v" x="733" y="464">0'</text>
<text class="lb" x="610" y="480" textLength="27" lengthAdjust="spacingAndGlyphs">Gesamt</text><text class="v" x="727" y="480" textLength="20" lengthAdjust="spacingAndGlyphs">13:07</text>

<rect x="0" y="483" width="752" height="11" fill="#c9c9c9"/>
<rect x="0" y="483" width="11" height="11" fill="#f0f0f0"/>
<path d="M6.500 486l-2.500 2.500 2.500 2.500" stroke="#aaa" fill="none"/>
<rect x="0" y="494" width="752" height="15" fill="#f1efef"/>
<rect x="0" y="509" width="752" height="1" fill="#999"/>
</svg>
</body></html>
